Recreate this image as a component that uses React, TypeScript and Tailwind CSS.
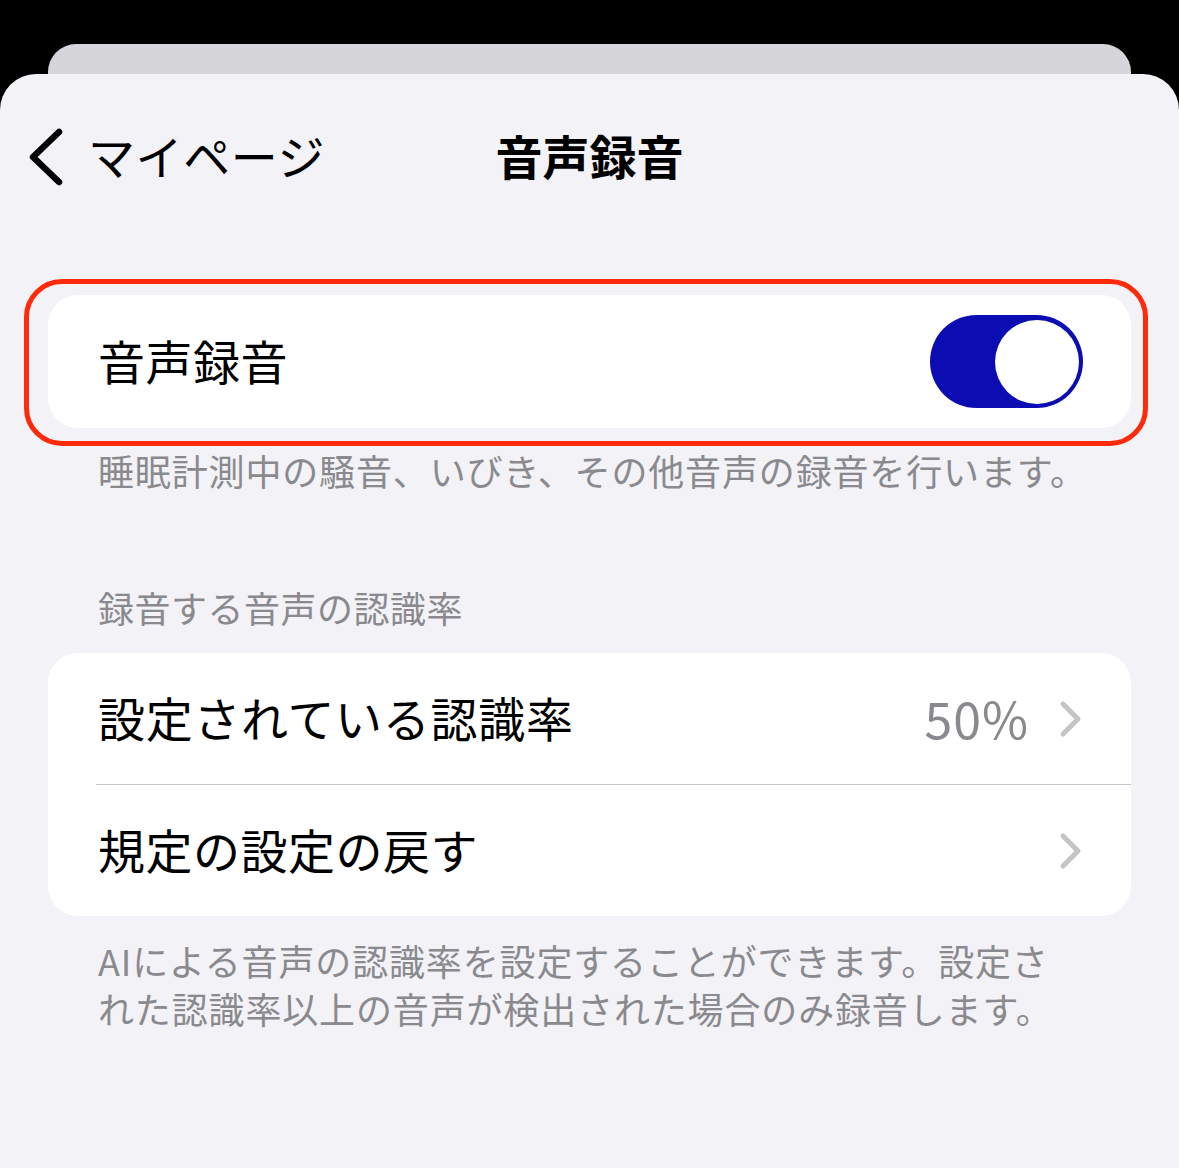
import React from "react";

const font = { fontFamily: '"Noto Sans CJK JP", "Noto Sans", sans-serif' };

function Chevron() {
  return (
    <svg width="24" height="38" viewBox="0 0 24 38" fill="none">
      <path d="M4 4 L19 19 L4 34" stroke="#c4c4c7" strokeWidth="5" strokeLinecap="round" strokeLinejoin="round" />
    </svg>
  );
}

export default function App() {
  return (
    <div className="w-[1179px] h-[1168px] bg-black overflow-hidden flex flex-col" style={font}>
      <div className="h-[44px] shrink-0" />
      <div className="h-[30px] shrink-0 mx-[48px] bg-[#d5d5da] rounded-t-[28px]" />
      <div className="flex-1 bg-[#f2f2f7] rounded-t-[36px] flex flex-col">
        {/* nav */}
        <div className="h-[166px] shrink-0 relative flex items-center">
          <div className="flex items-center pl-[26px]">
            <svg width="40" height="60" viewBox="0 0 40 60" fill="none">
              <path d="M33 5 L7 30 L33 55" stroke="#000" strokeWidth="6.5" strokeLinecap="round" strokeLinejoin="round" />
            </svg>
            <span className="ml-[22px] pb-[6px] text-[47px] leading-none tracking-[0.6px] text-black">マイページ</span>
          </div>
          <div className="absolute left-0 right-0 top-0 bottom-0 flex items-center justify-center pointer-events-none">
            <span className="pb-[6px] text-[47px] leading-none font-bold text-black">音声録音</span>
          </div>
        </div>

        {/* card 1 */}
        <div className="mt-[55px] relative mx-[48px]">
          <div className="h-[133px] bg-white rounded-[30px] flex items-center justify-between pl-[50px] pr-[48px]">
            <span className="pb-[5px] text-[47px] leading-none tracking-[0.5px] text-black">音声録音</span>
            <div className="w-[153px] h-[93px] rounded-full bg-[#0b0cb2] flex items-center justify-end pr-[4px]">
              <div className="w-[84px] h-[84px] rounded-full bg-white" />
            </div>
          </div>
          <div className="absolute left-[-24px] right-[-17px] top-[-16px] bottom-[-18px] border-[5px] border-[#ff2a0a] rounded-[38px] pointer-events-none" />
        </div>

        <div className="mt-[18px] pl-[98px] text-[36px] leading-[48px] tracking-[0.85px] text-[#8a8a8e]">
          睡眠計測中の騒音、いびき、その他音声の録音を行います。
        </div>

        <div className="mt-[89px] pl-[98px] text-[36px] leading-[48px] tracking-[0.5px] text-[#8a8a8e]">
          録音する音声の認識率
        </div>

        {/* card 2 */}
        <div className="mt-[22px] mx-[48px] bg-white rounded-[30px] overflow-hidden">
          <div className="h-[131px] flex items-center justify-between pl-[50px] pr-[48px]">
            <span className="pb-[5px] text-[47px] leading-none tracking-[0.7px] text-black">設定されている認識率</span>
            <div className="flex items-center gap-[30px]">
              <span className="pb-[4px] text-[50px] leading-none tracking-[1px] text-[#8a8a8e]">50%</span>
              <Chevron />
            </div>
          </div>
          <div className="ml-[48px] h-[1px] bg-[#c6c6c8]" />
          <div className="h-[131px] flex items-center justify-between pl-[50px] pr-[48px]">
            <span className="pb-[5px] text-[47px] leading-none tracking-[0.5px] text-black">規定の設定の戻す</span>
            <Chevron />
          </div>
        </div>

        <div className="mt-[20px] pl-[98px] pr-[40px] text-[36px] leading-[48px] tracking-[0.85px] text-[#8a8a8e]">
          AIによる音声の認識率を設定することができます。設定さ
          <br />
          れた認識率以上の音声が検出された場合のみ録音します。
        </div>
      </div>
    </div>
  );
}
